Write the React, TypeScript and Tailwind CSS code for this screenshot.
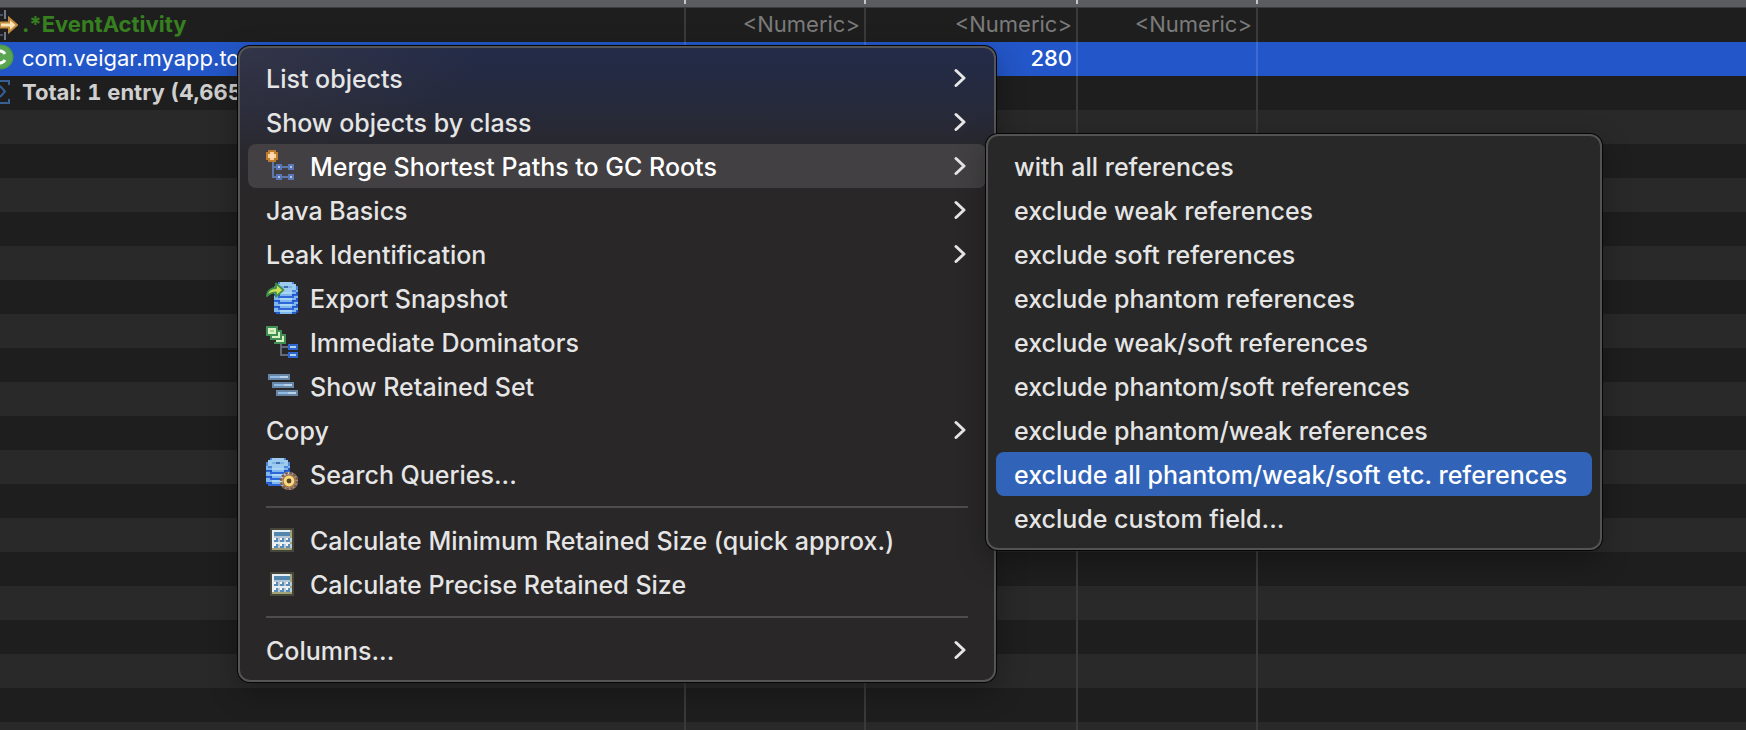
import type { ReactNode } from "react";

/* ---------- icons (16-unit grid drawn at 32px) ---------- */

function Icon({ children }: { children: ReactNode }) {
  return (
    <svg viewBox="0 0 16 16" className="h-8 w-8 shrink-0" aria-hidden="true">
      {children}
    </svg>
  );
}

function MergePathsIcon() {
  const nodes = [
    [5, 7],
    [11, 7],
    [5, 12],
    [11, 12],
  ];
  return (
    <Icon>
      <path d="M3 6h1v2h8v1H4v4h8v1H3z" fill="#5c78ad" />
      {nodes.map(([x, y]) => (
        <g key={`${x}-${y}`}>
          <rect x={x} y={y} width="3" height="3" fill="#5876b8" />
          <rect x={x + 1} y={y + 1} width="1" height="1" fill="#b3c2e2" />
        </g>
      ))}
      <path d="M1 0h4v1h1v4H5v1H1V5H0V1h1z" fill="#c07a2e" />
      <path d="M2 1h2v1h1v2H4v1H2V4H1V2h1z" fill="#f9cf9c" />
      <rect x="2" y="2" width="2" height="2" fill="#fcdcb6" />
    </Icon>
  );
}

function Cylinder({ x, height }: { x: number; height: number }) {
  const rows = [];
  for (let y = 4; y + 2 <= height; y += 3) rows.push(y);
  return (
    <g transform={`translate(${x} 0)`}>
      <path d={`M0 2h12v${height - 3}h-1v1H1v-1H0z`} fill="#2f68d6" />
      {rows.map((y) => (
        <g key={y}>
          <path d={`M0 ${y}h2v1h8v-1h2v1h-1v1H9v1H3v-1H0z`} fill="#7fb6ee" />
          <rect x="3" y={y + 1} width="6" height="1" fill="#a9d5f7" />
          <path d={`M0 ${y + 2}h3v1h6v-1h2v-1h1v1.500h-2v.5H2v-.5H0z`} fill="#1f4fc6" opacity="0.7" />
        </g>
      ))}
      <path d="M2 0h8v1h1v1h1v2h-1v1H1V4H0V2h1V1h1z" fill="#4a86d8" />
      <path d="M3 0h6v1h2v3H9v1H3V4H1V1h2z" fill="#9dcbf0" />
      <rect x="3" y="2" width="6" height="1" fill="#7db4e4" />
      <rect x="5" y="2" width="2" height="1" fill="#3e6fae" />
    </g>
  );
}

function ExportIcon() {
  return (
    <Icon>
      <Cylinder x={4} height={16} />
      <path d="M.5 7C.5 4.500 2.500 3 5 3V.7L8.700 4 5 7.300V5.200C3.200 5.200 1.700 5.800 .5 7z" fill="#cfdd55" stroke="#3f9148" strokeWidth="0.9" strokeLinejoin="round" />
    </Icon>
  );
}

function DominatorsIcon() {
  return (
    <Icon>
      <path d="M7 9h1v1h3v1H8v3h3v1H7z" fill="#626b7c" />
      <path d="M9 4h1v5H4V8h1V6h3V4z" fill="#3f8f55" />
      <path d="M8 5h1v3H5V7h3z" fill="#d8f0c4" />
      <path d="M7 2h1v5H2V5h1V4h3V2z" fill="#3f8f55" />
      <path d="M6 3h1v3H3V5h3z" fill="#d8f0c4" />
      <rect width="6" height="5" fill="#3f8f55" />
      <rect x="1" y="1" width="4" height="3" fill="#d8f0c4" />
      <rect x="2" y="2" width="2" height="1" fill="#a3d68c" />
      <rect x="11" y="9" width="5" height="3" fill="#2f66cc" />
      <rect x="12" y="10" width="3" height="1" fill="#a9d4f5" />
      <rect x="11" y="13" width="5" height="3" fill="#2f66cc" />
      <rect x="12" y="14" width="3" height="1" fill="#a9d4f5" />
    </Icon>
  );
}

function RetainedSetIcon() {
  return (
    <Icon>
      {[0, 1, 2].map((i) => (
        <g key={i} transform={`translate(${1 + i * 2} ${2 + i * 4})`}>
          <rect width="11" height="3" fill="#6785a5" />
          <rect x="1" y="1" width="5" height="1" fill="#8fbbe4" />
          <rect x="6" y="1" width="4" height="1" fill="#b9d2ec" />
        </g>
      ))}
    </Icon>
  );
}

function SearchQueriesIcon() {
  return (
    <Icon>
      <Cylinder x={0} height={14} />
      <circle cx="11.5" cy="11.5" r="4.6" fill="#d6def2" opacity="0.6" />
      <circle cx="11.5" cy="11.5" r="4" fill="none" stroke="#85583a" strokeWidth="1.2" strokeDasharray="1.3 0.8" />
      <circle cx="11.5" cy="11.5" r="3.3" fill="#a66f35" />
      <circle cx="11.5" cy="11.5" r="2.7" fill="#f6dc80" />
      <circle cx="11.5" cy="11.5" r="1.2" fill="#5c4228" />
    </Icon>
  );
}

function CalculatorIcon() {
  return (
    <Icon>
      <rect x="2" y="2" width="12" height="12" fill="#47463a" />
      <rect x="3" y="3" width="10" height="10" fill="#a3a376" />
      <rect x="3" y="3" width="9" height="9" fill="#e9eef0" />
      <rect x="4" y="4" width="8" height="2" fill="#5387ad" />
      <rect x="4" y="6" width="8" height="1" fill="#b5c6d2" />
      {[7, 10].map((y) =>
        [4, 7, 10].map((x) => (
          <g key={`${x}-${y}`}>
            <rect x={x} y={y} width="2" height="2" fill="#5a8db5" />
            <rect x={x} y={y} width="1" height="1" fill="#f6f9fb" />
            <rect x={x + 2} y={y} width="1" height="2" fill="#bccad5" />
          </g>
        )),
      )}
    </Icon>
  );
}

function Chevron() {
  return (
    <svg viewBox="0 0 12 20" className="mr-0.5 h-5 w-3 shrink-0" aria-hidden="true">
      <path d="M2 2.5l8 7.5-8 7.5" fill="none" stroke="#e6e6e6" strokeWidth="3" strokeLinecap="round" strokeLinejoin="round" />
    </svg>
  );
}

function FilterIcon() {
  return (
    <svg viewBox="0 0 18 34" className="h-[34px] w-[18px] shrink-0" aria-hidden="true">
      <path d="M5 2v9M5 24v8" stroke="#707789" strokeWidth="2" />
      <path d="M0 7h3M0 27h3" stroke="#4a5262" strokeWidth="2" />
      <path d="M0 14.500h9v-4.500l8 7-8 7v-4.500H0z" fill="#f8e6b8" stroke="#c48a3c" strokeWidth="2" />
    </svg>
  );
}

function ClassIcon() {
  return (
    <svg viewBox="0 0 18 34" className="h-[34px] w-[18px] shrink-0" aria-hidden="true">
      <circle cx="1" cy="15" r="12.500" fill="#4a9a48" />
      <circle cx="1" cy="15" r="11" fill="#5aa552" />
      <path d="M5 12A6 6 0 1 0 5 18" fill="none" stroke="#fff" strokeWidth="3" />
    </svg>
  );
}

function SumIcon() {
  return (
    <svg viewBox="0 0 18 34" className="h-[34px] w-[18px] shrink-0" aria-hidden="true">
      <path d="M0 5h9v4M0 27h9v-4M0 10l5 5.500-5 5.500" fill="none" stroke="#365f94" strokeWidth="2" />
    </svg>
  );
}

/* ---------- menus ---------- */

type Entry =
  | { kind: "item"; label: string; icon?: ReactNode; sub?: boolean; open?: boolean; selected?: boolean }
  | { kind: "separator" };

const mainMenu: Entry[] = [
  { kind: "item", label: "List objects", sub: true },
  { kind: "item", label: "Show objects by class", sub: true },
  { kind: "item", label: "Merge Shortest Paths to GC Roots", icon: <MergePathsIcon />, sub: true, open: true },
  { kind: "item", label: "Java Basics", sub: true },
  { kind: "item", label: "Leak Identification", sub: true },
  { kind: "item", label: "Export Snapshot", icon: <ExportIcon /> },
  { kind: "item", label: "Immediate Dominators", icon: <DominatorsIcon /> },
  { kind: "item", label: "Show Retained Set", icon: <RetainedSetIcon /> },
  { kind: "item", label: "Copy", sub: true },
  { kind: "item", label: "Search Queries...", icon: <SearchQueriesIcon /> },
  { kind: "separator" },
  { kind: "item", label: "Calculate Minimum Retained Size (quick approx.)", icon: <CalculatorIcon /> },
  { kind: "item", label: "Calculate Precise Retained Size", icon: <CalculatorIcon /> },
  { kind: "separator" },
  { kind: "item", label: "Columns...", sub: true },
];

const subMenu: Entry[] = [
  { kind: "item", label: "with all references" },
  { kind: "item", label: "exclude weak references" },
  { kind: "item", label: "exclude soft references" },
  { kind: "item", label: "exclude phantom references" },
  { kind: "item", label: "exclude weak/soft references" },
  { kind: "item", label: "exclude phantom/soft references" },
  { kind: "item", label: "exclude phantom/weak references" },
  { kind: "item", label: "exclude all phantom/weak/soft etc. references", selected: true },
  { kind: "item", label: "exclude custom field..." },
];

function Menu({ entries, className }: { entries: Entry[]; className: string }) {
  return (
    <div
      role="menu"
      className={`absolute rounded-xl border-2 p-2 text-[25px] leading-[42px] font-medium text-[#e5e5e5] ${className}`}
    >
      {entries.map((entry, i) => {
        if (entry.kind === "separator") {
          return (
            <div key={i} role="separator" className="px-[18px] py-[10px]">
              <div className="h-[2px] bg-[#4e4d4e]" />
            </div>
          );
        }
        const tone = entry.selected
          ? "bg-[#3164b8] text-white"
          : entry.open
            ? "bg-[#424042] text-white"
            : "";
        return (
          <button
            key={i}
            type="button"
            role="menuitem"
            aria-haspopup={entry.sub ? "menu" : undefined}
            className={`flex h-11 w-full items-center gap-3 rounded-lg px-[18px] text-left whitespace-nowrap ${tone}`}
          >
            {entry.icon}
            <span className="grow pt-0.5">{entry.label}</span>
            {entry.sub && <Chevron />}
          </button>
        );
      })}
    </div>
  );
}

/* ---------- histogram table ---------- */

type Row = { icon?: ReactNode; name?: string; nameClass?: string; values?: string[]; tone?: string };

const rows: Row[] = [
  {
    icon: <FilterIcon />,
    name: ".*EventActivity",
    nameClass: "font-bold text-[#36801f]",
    values: ["<Numeric>", "<Numeric>", "<Numeric>"],
    tone: "text-[#7b7b7b]",
  },
  {
    icon: <ClassIcon />,
    name: "com.veigar.myapp.to",
    nameClass: "font-normal text-white",
    values: ["", "280", ""],
    tone: "selected",
  },
  { icon: <SumIcon />, name: "Total: 1 entry (4,665", nameClass: "font-bold text-[#cfcfcf] tabular-nums" },
  ...Array.from({ length: 19 }, () => ({})),
];

function HistogramTable() {
  return (
    <table className="w-full table-fixed border-separate border-spacing-0 text-[22px] leading-[32px]">
      <colgroup>
        <col className="w-[686px]" />
        <col className="w-[180px]" />
        <col className="w-[212px]" />
        <col className="w-[180px]" />
        <col />
      </colgroup>
      <thead>
        <tr>
          {[0, 1, 2, 3, 4].map((c) => (
            <th key={c} className="h-2 border-b border-[#3c3c3d] bg-[#5b5c5f] p-0 align-top">
              <div className={`h-1 ${c < 4 ? "border-r-2 border-[#c4c4c4]" : ""}`} />
            </th>
          ))}
        </tr>
      </thead>
      <tbody>
        {rows.map((row, r) => {
          const selected = row.tone === "selected";
          const bg = selected ? "bg-[#2356c8] font-medium text-white" : r % 2 ? "bg-[#292929]" : "bg-[#1e1e1e]";
          const line = selected ? "border-[#3e6bcf]" : "border-[#3a3a3a]";
          return (
            <tr key={r} className={`${bg} ${selected ? "" : (row.tone ?? "")}`}>
              <td className={`h-[34px] border-r-2 p-0 ${line}`}>
                <div className="flex h-[34px] items-start gap-1 overflow-hidden whitespace-nowrap">
                  {row.icon}
                  <span className={row.nameClass}>{row.name}</span>
                </div>
              </td>
              {[0, 1, 2].map((c) => (
                <td key={c} className={`border-r-2 py-0 pr-1 pl-0 text-right align-top ${line}`}>
                  {row.values?.[c]}
                </td>
              ))}
              <td className="p-0" />
            </tr>
          );
        })}
      </tbody>
    </table>
  );
}

export default function App() {
  return (
    <main className="relative h-screen overflow-hidden bg-[#1e1e1e] font-['Inter',sans-serif]">
      <HistogramTable />
      <Menu
        entries={mainMenu}
        className="top-[46px] left-[238px] w-[758px] border-[#555456] bg-[#292728] bg-[radial-gradient(240px_110px_at_0_0,rgba(70,64,70,0.45),rgba(70,64,70,0)),linear-gradient(180deg,#232b49,#252a3d_50px,#29282e_100px,#292728_150px)] shadow-[0_0_0_1px_#060606,0_10px_30px_rgba(0,0,0,0.3)]"
      />
      <Menu
        entries={subMenu}
        className="top-[134px] left-[986px] w-[616px] border-[#535353] bg-[#282828] shadow-[0_0_0_1px_#060606,0_10px_30px_rgba(0,0,0,0.3)]"
      />
    </main>
  );
}
